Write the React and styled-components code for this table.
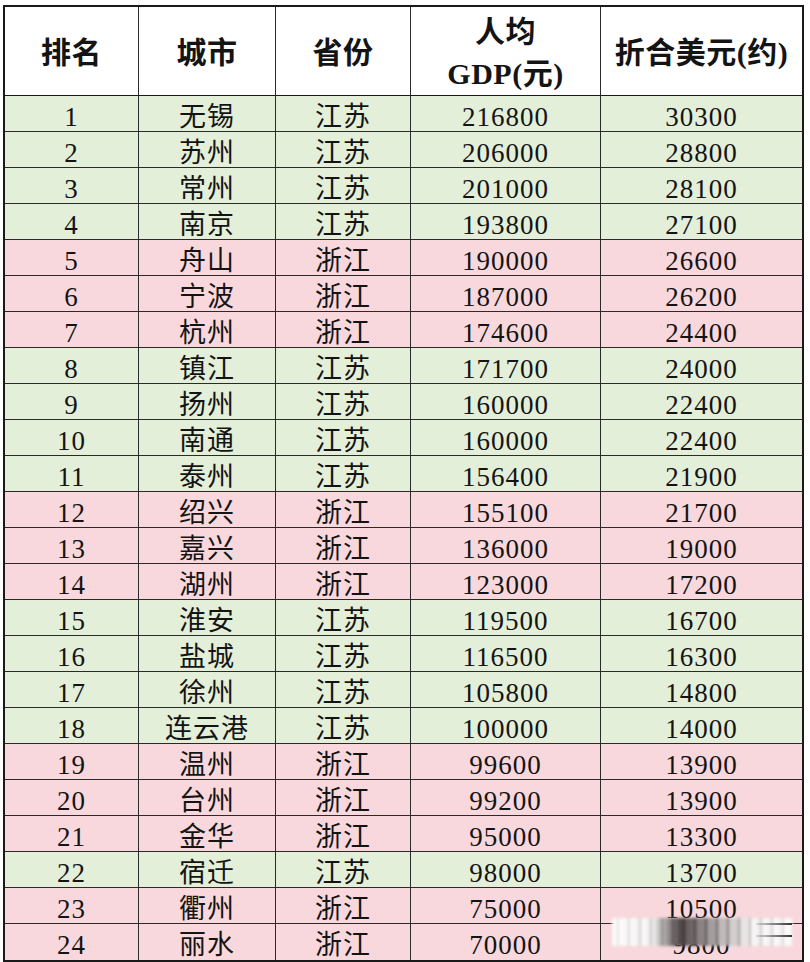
import React from 'react';
import styled, { createGlobalStyle } from 'styled-components';

const GlobalStyle = createGlobalStyle`
  html, body {
    margin: 0;
    padding: 0;
    background: #ffffff;
  }
`;

const Page = styled.div`
  width: 810px;
  height: 962px;
  padding: 5px 0 0 3px;
  box-sizing: border-box;
  position: relative;
  overflow: hidden;
  font-family: "Liberation Serif", "Noto Sans CJK SC", serif;
  color: #141414;
`;

const Grid = styled.div`
  width: 801px;
  display: grid;
  grid-template-columns: 134px 137px 135px 190px 201px;
  grid-template-rows: 89px repeat(24, 36px);
  border: 2px solid #1a1a1a;
  box-sizing: border-box;
`;

const Cell = styled.div`
  display: flex;
  align-items: center;
  justify-content: center;
  text-align: center;
  box-sizing: border-box;
  border-right: ${p => (p.$last ? 'none' : '1px solid #2a2a2a')};
  border-bottom: ${p => (p.$bottom ? 'none' : '1px solid #2a2a2a')};
  background: ${p => p.$bg || '#ffffff'};
  font-size: 27px;
  letter-spacing: 1px;
  line-height: 1;
  padding-top: 7px;
`;

const HeadCell = styled(Cell)`
  font-size: 30px;
  font-weight: bold;
  letter-spacing: 0.5px;
  line-height: 42px;
  flex-direction: column;
  padding-top: 3px;
  border-bottom: 1px solid #1a1a1a;
`;

const Watermark = styled.div`
  position: absolute;
  left: 612px;
  top: 918px;
  width: 180px;
  height: 28px;
  filter: blur(1.4px);
  background:
    linear-gradient(90deg, rgba(255,255,255,0.85) 0%, rgba(255,255,255,0.55) 22%, rgba(30,20,20,0.75) 38%, rgba(50,40,40,0.55) 48%, rgba(120,110,110,0.35) 62%, rgba(255,255,255,0.55) 78%, rgba(255,255,255,0.75) 100%),
    repeating-linear-gradient(90deg, #e4e0e0 0 5px, #7a7272 5px 7px, #f2eeee 7px 11px);
`;

const WatermarkLine = styled.div`
  position: absolute;
  left: 756px;
  top: ${p => p.$top}px;
  width: 36px;
  height: 2px;
  background: linear-gradient(90deg, rgba(120,110,110,0.2), #333);
  filter: blur(0.6px);
`;

const GREEN = '#e3efd9';
const PINK = '#f8d8dc';

const rows = [
  [1, '无锡', '江苏', 216800, 30300],
  [2, '苏州', '江苏', 206000, 28800],
  [3, '常州', '江苏', 201000, 28100],
  [4, '南京', '江苏', 193800, 27100],
  [5, '舟山', '浙江', 190000, 26600],
  [6, '宁波', '浙江', 187000, 26200],
  [7, '杭州', '浙江', 174600, 24400],
  [8, '镇江', '江苏', 171700, 24000],
  [9, '扬州', '江苏', 160000, 22400],
  [10, '南通', '江苏', 160000, 22400],
  [11, '泰州', '江苏', 156400, 21900],
  [12, '绍兴', '浙江', 155100, 21700],
  [13, '嘉兴', '浙江', 136000, 19000],
  [14, '湖州', '浙江', 123000, 17200],
  [15, '淮安', '江苏', 119500, 16700],
  [16, '盐城', '江苏', 116500, 16300],
  [17, '徐州', '江苏', 105800, 14800],
  [18, '连云港', '江苏', 100000, 14000],
  [19, '温州', '浙江', 99600, 13900],
  [20, '台州', '浙江', 99200, 13900],
  [21, '金华', '浙江', 95000, 13300],
  [22, '宿迁', '江苏', 98000, 13700],
  [23, '衢州', '浙江', 75000, 10500],
  [24, '丽水', '浙江', 70000, 9800],
];

export default function App() {
  return (
    <Page>
      <GlobalStyle />
      <Grid>
        <HeadCell>排名</HeadCell>
        <HeadCell>城市</HeadCell>
        <HeadCell>省份</HeadCell>
        <HeadCell>
          <span>人均</span>
          <span>GDP(元)</span>
        </HeadCell>
        <HeadCell $last>折合美元(约)</HeadCell>
        {rows.map((r, i) => {
          const bg = r[2] === '江苏' ? GREEN : PINK;
          const bottom = i === rows.length - 1;
          return r.map((v, j) => (
            <Cell key={`${i}-${j}`} $bg={bg} $last={j === 4} $bottom={bottom}>
              {v}
            </Cell>
          ));
        })}
      </Grid>
      <Watermark />
      <WatermarkLine $top={923} />
      <WatermarkLine $top={935} />
    </Page>
  );
}
